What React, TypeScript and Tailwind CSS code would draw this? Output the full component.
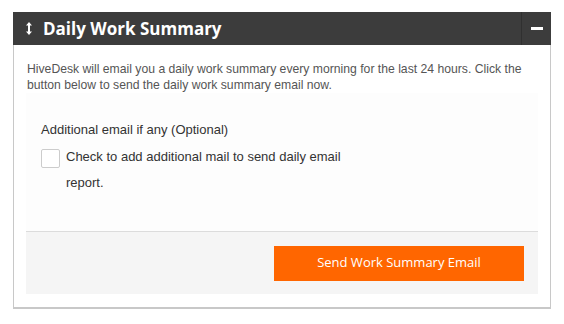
export default function App() {
  return (
    <div className="min-h-[324px] bg-white pl-[13px] pt-[12px] font-['Liberation_Sans',Arial,sans-serif]">
      <div className="w-[538px] border-x border-b-2 border-[#c8c8c8] border-t-0">
        <div className="-mx-px flex h-[33px] items-stretch bg-[#3c3c3c]">
          <div className="flex flex-1 items-center gap-[11px] pl-[13px]">
            <svg width="6" height="13" viewBox="0 0 6 13" className="text-white">
              <path d="M3 0 L6 3.5 H4 V9.5 H6 L3 13 L0 9.5 H2 V3.5 H0 Z" fill="currentColor" />
            </svg>
            <span className="font-['Open_Sans',sans-serif] text-[17px] font-bold text-white">Daily Work Summary</span>
          </div>
          <div className="flex w-[30px] items-center justify-center border-l border-[#303030]">
            <div className="h-[3px] w-[12px] bg-white" />
          </div>
        </div>
        <div className="px-[12px] pb-[13px] pt-[16px]">
          <p className="pl-px text-[12.2px] leading-[16px] text-[#555]">
            HiveDesk will email you a daily work summary every morning for the last 24 hours. Click the button below to send the daily work summary email now.
          </p>
          <div className="bg-[#fdfdfd]">
            <div className="h-[138px] pl-[15px] pt-[28px] text-[13px] text-[#333]">
              <p className="leading-[18px]">Additional email if any (Optional)</p>
              <label className="mt-[9px] flex items-start gap-[6px]">
                <span className="mt-[1px] block h-[19px] w-[19px] shrink-0 rounded-[2px] border border-[#ccc] bg-white" />
                <span className="w-[285px] leading-[26px] -mt-[4px]">Check to add additional mail to send daily email report.</span>
              </label>
            </div>
            <div className="flex h-[63px] items-center justify-end border-t border-[#dcdcdc] bg-[#f5f5f5] pr-[14px]">
              <button className="h-[35px] w-[250px] bg-[#ff6600] font-['Open_Sans',sans-serif] text-[13px] text-white">
                Send Work Summary Email
              </button>
            </div>
          </div>
        </div>
      </div>
    </div>
  );
}
